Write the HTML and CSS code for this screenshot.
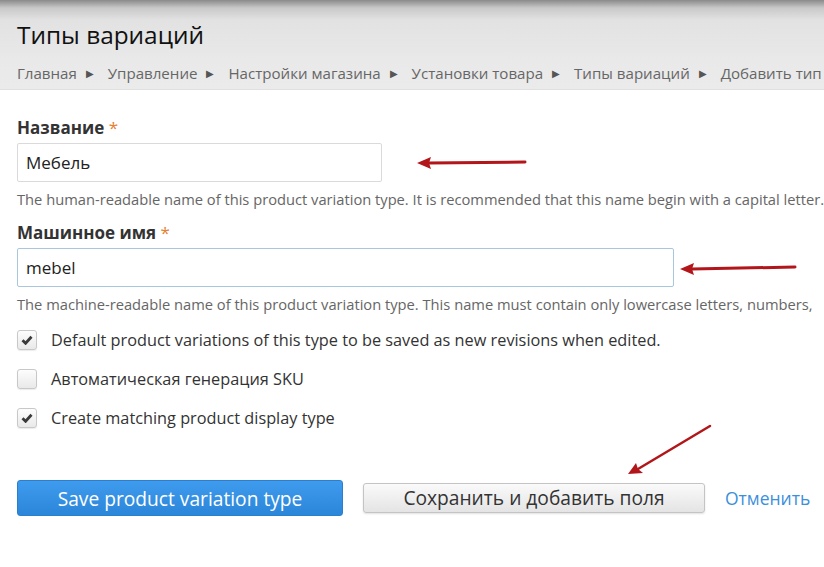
FILE: index.html
```html
<!DOCTYPE html>
<html lang="ru">
<head>
    <meta charset="UTF-8">
    <title>Типы вариаций</title>
    <link rel="stylesheet" href="styles.css">
</head>
<body>

<div class="header">
    <h1 class="page-title">Типы вариаций</h1>
    <div class="breadcrumb">
        <span>Главная</span><span class="sep">&#9654;</span>
        <span>Управление</span><span class="sep">&#9654;</span>
        <span>Настройки магазина</span><span class="sep">&#9654;</span>
        <span>Установки товара</span><span class="sep">&#9654;</span>
        <span>Типы вариаций</span><span class="sep">&#9654;</span>
        <span>Добавить тип</span>
    </div>
</div>

<form class="content">
    <div class="form-item">
        <label class="form-label">Название <span class="required">*</span></label>
        <div class="field-row">
            <input class="form-text name-input" type="text" value="Мебель">
            <svg class="arrow arrow-one" width="110" height="14" viewBox="0 0 110 14">
                <path d="M12 7 L108 6" stroke="#b2161a" stroke-width="3" fill="none" stroke-linecap="round"/>
                <path d="M0 7 L14 1 L12 7 L14 13 Z" fill="#b2161a"/>
            </svg>
        </div>
        <div class="description">The human-readable name of this product variation type. It is recommended that this name begin with a capital letter.</div>
    </div>

    <div class="form-item">
        <label class="form-label">Машинное имя <span class="required">*</span></label>
        <div class="field-row">
            <input class="form-text machine-input" type="text" value="mebel">
            <svg class="arrow arrow-two" width="117" height="14" viewBox="0 0 117 14">
                <path d="M12 8 L115 6" stroke="#b2161a" stroke-width="3" fill="none" stroke-linecap="round"/>
                <path d="M0 8 L14 2 L12 8 L14 14 Z" fill="#b2161a"/>
            </svg>
        </div>
        <div class="description">The machine-readable name of this product variation type. This name must contain only lowercase letters, numbers,</div>
    </div>

    <div class="checks">
        <label class="check">
            <span class="box"><svg width="12" height="10" viewBox="0 0 12 10"><path d="M1.5 5.2 L4.6 8.3 L10.5 1.8" stroke="#3a3a3a" stroke-width="2.8" fill="none"/></svg></span>
            Default product variations of this type to be saved as new revisions when edited.
        </label>
        <label class="check">
            <span class="box"></span>
            Автоматическая генерация SKU
        </label>
        <label class="check">
            <span class="box"><svg width="12" height="10" viewBox="0 0 12 10"><path d="M1.5 5.2 L4.6 8.3 L10.5 1.8" stroke="#3a3a3a" stroke-width="2.8" fill="none"/></svg></span>
            Create matching product display type
        </label>
    </div>

    <div class="actions">
        <button type="button" class="button primary">Save product variation type</button>
        <button type="button" class="button secondary">Сохранить и добавить поля</button>
        <a class="cancel" href="#">Отменить</a>
        <svg class="arrow arrow-three" width="84" height="52" viewBox="0 0 84 52">
            <path d="M10 45 L82 2" stroke="#b2161a" stroke-width="2.5" fill="none" stroke-linecap="round"/>
            <path d="M0 50 L8 39 L10 45 L15 49 Z" fill="#b2161a"/>
        </svg>
    </div>
</form>

</body>
</html>
```

FILE: styles.css
```css
body {
    margin: 0;
    font-family: "Open Sans", "Noto Sans", sans-serif;
    color: #333;
    background: #fff;
    overflow: hidden;
}
.header {
    height: 90px;
    box-sizing: border-box;
    padding: 20px 17px 0;
    background: linear-gradient(to bottom, #8a8a8a 0px, #c9c9c9 8px, #e2e2e2 20px, #e9e9e9 60px, #ebebeb 90px);
    border-bottom: 1px solid #e0e0e0;
    white-space: nowrap;
    overflow: hidden;
}
.page-title {
    margin: 0;
    font-size: 24.4px;
    font-weight: normal;
    line-height: 30px;
    color: #111;
}
.breadcrumb {
    margin-top: 13px;
    font-size: 15.1px;
    color: #666;
}
.breadcrumb .sep {
    font-size: 10px;
    margin: 0 10px 0 9px;
    color: #555;
    position: relative;
    top: -2px;
}
.content {
    padding: 28px 17px 0;
}
.form-item {
    margin-bottom: 15px;
    white-space: nowrap;
}
.form-label {
    display: block;
    font-size: 17px;
    font-weight: bold;
    color: #333;
    line-height: 20px;
    margin-bottom: 5px;
}
.required {
    color: #e8802f;
    font-weight: normal;
}
.field-row {
    display: flex;
    align-items: center;
}
.form-text {
    box-sizing: border-box;
    height: 39px;
    padding: 0 8px;
    font-family: "Open Sans", "Noto Sans", sans-serif;
    font-size: 17px;
    color: #222;
    border: 1px solid #dadada;
    border-radius: 2px;
    background: #fff;
}
.name-input {
    width: 365px;
}
.machine-input {
    width: 657px;
    border-color: #a9c6df;
}
.arrow {
    display: block;
    flex-shrink: 0;
}
.arrow-one {
    margin-left: 35px;
}
.arrow-two {
    margin-left: 6px;
}
.description {
    margin-top: 8px;
    font-size: 14.7px;
    color: #666;
    line-height: 18px;
}
.checks {
    display: flex;
    flex-direction: column;
    gap: 17px;
    margin-top: 16px;
}
.check {
    display: flex;
    align-items: center;
    gap: 14px;
    font-size: 16.3px;
    color: #333;
    line-height: 22px;
    white-space: nowrap;
}
.box {
    width: 18px;
    height: 18px;
    border: 1px solid #c8c8c8;
    border-radius: 3px;
    background: linear-gradient(to bottom, #fdfdfd, #e9e9e9);
    box-shadow: 0 1px 1px rgba(0, 0, 0, 0.08);
    display: flex;
    align-items: center;
    justify-content: center;
}
.actions {
    position: relative;
    display: flex;
    align-items: center;
    margin-top: 51px;
}
.button {
    box-sizing: border-box;
    flex-shrink: 0;
    padding: 0;
    font-family: "Open Sans", "Noto Sans", sans-serif;
    font-size: 19.2px;
    border-radius: 3px;
    cursor: pointer;
}
.primary {
    width: 326px;
    height: 36px;
    color: #fff;
    border: 1px solid #2a7fcf;
    background: linear-gradient(to bottom, #3f9bed, #2b86d9);
}
.secondary {
    width: 342px;
    height: 30px;
    margin-left: 20px;
    color: #333;
    border: 1px solid #c4c4c4;
    background: linear-gradient(to bottom, #fafafa, #e4e4e4);
    box-shadow: 0 1px 2px rgba(0, 0, 0, 0.12);
    line-height: 26px;
}
.cancel {
    flex-shrink: 0;
    margin-left: 20px;
    font-size: 17.5px;
    color: #3b8fdc;
    text-decoration: none;
}
.arrow-three {
    position: absolute;
    left: 611px;
    top: -56px;
}
```
